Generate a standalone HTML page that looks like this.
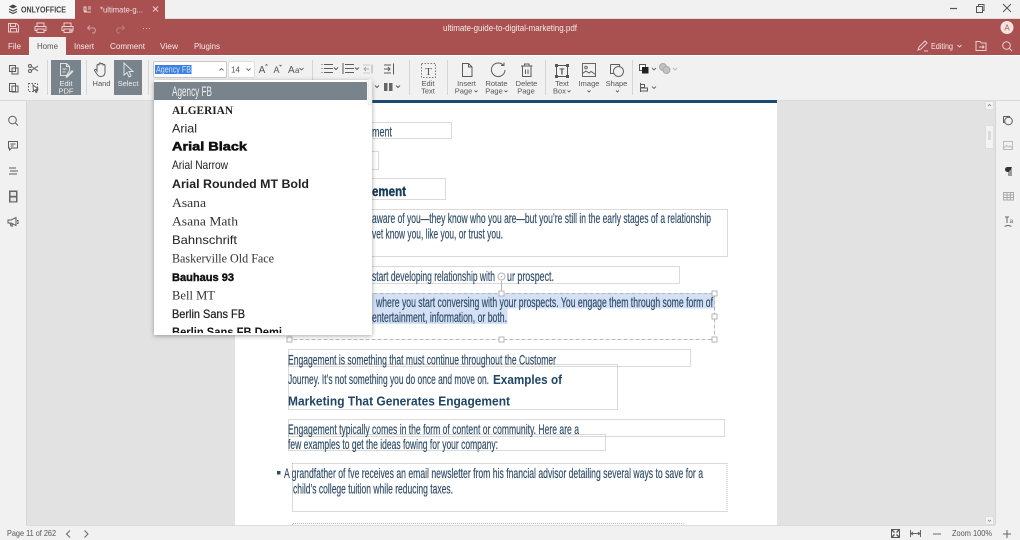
<!DOCTYPE html>
<html><head><meta charset="utf-8"><title>ONLYOFFICE</title>
<style>
html,body{margin:0;padding:0;width:1020px;height:540px;overflow:hidden;background:#f1f1f1}
svg{display:block;font-family:"Liberation Sans",sans-serif}
.i{fill:none;stroke:#5c5c5c;stroke-width:1}
.r{fill:none;stroke:#e9cfcf;stroke-width:1}
.t{font-size:7.5px;fill:#555;text-anchor:middle}
.tw{font-size:7.5px;fill:#eef0f1;text-anchor:middle}
.w{font-size:8.5px;fill:#f6e9e9}
.p{font-family:"Liberation Sans Narrow","Liberation Sans",sans-serif;font-size:14px;fill:#2f4c66;stroke:#2f4c66;stroke-width:.18}
.b{fill:none;stroke:#b5b5b5;stroke-width:1;stroke-dasharray:1 1}
.h{fill:#fff;stroke:#b5b5b5;stroke-width:1}
.d{font-size:12px;fill:#222}
.s{font-family:"Liberation Serif",serif;font-size:13px;fill:#333}
.n{font-family:"Liberation Sans Narrow","Liberation Sans",sans-serif}
.c{fill:none;stroke:#666;stroke-width:.9}
</style></head><body>
<svg width="1020" height="540" viewBox="0 0 1020 540" xmlns="http://www.w3.org/2000/svg">
<defs>
<filter id="sh" x="-10%" y="-10%" width="120%" height="120%"><feDropShadow dx="0" dy="1" stdDeviation="2.5" flood-color="#000" flood-opacity=".35"/></filter>
<clipPath id="dd"><rect x="154" y="80" width="218" height="253"/></clipPath>
</defs>

<!-- base -->
<rect width="1020" height="540" fill="#f1f1f1"/>
<!-- title bar -->
<rect x="0" y="0" width="75" height="18" fill="#f7f7f7"/>
<rect x="75" y="0" width="90" height="19" fill="#a95151"/>
<rect x="0" y="18" width="1020" height="1" fill="#dcdcdc"/>
<rect x="0" y="19" width="1020" height="36" fill="#a95151"/>
<rect x="75" y="17" width="90" height="3" fill="#a95151"/>
<rect x="0" y="55" width="1020" height="1" fill="#fff"/>
<rect x="29" y="37" width="37" height="19" fill="#f1f1f1"/>

<!-- logo -->
<path d="M9 6.500l4-2 4 2-4 2z" fill="#444"/><path d="M9 9l4 2 4-2M9 11.500l4 2 4-2" fill="none" stroke="#444" stroke-width="1.200"/>
<text x="21" y="12.500" font-size="8.500" font-weight="bold" fill="#444" textLength="45" lengthAdjust="spacingAndGlyphs">ONLYOFFICE</text>
<!-- tab -->
<path d="M84 7h2v4h-2zM88 7h3M88 9h3M84 12h7" class="r"/>
<text x="100" y="12.500" font-size="8.500" fill="#f0dddd" textLength="43" lengthAdjust="spacingAndGlyphs">*ultimate-g...</text>
<path d="M153 6.500l5 5M158 6.500l-5 5" class="r"/>
<!-- window buttons -->
<path d="M950 8.500h7" stroke="#555" stroke-width="1.200"/>
<path d="M976.500 6.500h6v6h-6z" fill="none" stroke="#555"/><path d="M978.500 6.500v-2h5.500v6h-1.500" fill="none" stroke="#555"/>
<path d="M1003 4l8 8M1011 4l-8 8" stroke="#555" stroke-width="1"/>

<!-- quick access -->
<path d="M8.500 23.500h8l2 2v6.500h-10zM10.500 23.500v3h5v-3M10.500 32v-3.500h6v3.500" class="r"/>
<path d="M37 26v-3h7v3M35 26.500h11v4h-2M37 30.500h-2v-4M37 29h7v3.500h-7z" class="r"/>
<path d="M64 26v-3h7v3M62 26.500h11v4h-2M64 30.500h-2v-4M64 29h7v3.500h-7z" class="r"/><circle cx="71" cy="31" r="2" fill="#d6b1b1"/>
<path d="M90 25.500l-2.500 2.500 2.500 2M88 28h6a3 3 0 0 1 0 5h-2" fill="none" stroke="#cf9f9f"/>
<path d="M122 25.500l2.500 2.500-2.500 2M124 28h-6a3 3 0 0 0 0 5h2" fill="none" stroke="#bb7b7b"/>
<path d="M143 28.500h1M146 28.500h1M149 28.500h1" stroke="#d9b5b5"/>

<text x="443" y="31" font-size="9" fill="#f6e9e9" textLength="134" lengthAdjust="spacingAndGlyphs">ultimate-guide-to-digital-marketing.pdf</text>
<circle cx="1007" cy="27.500" r="6.500" fill="#f3e4e2"/>
<text x="1007" y="30.500" font-size="8" fill="#a95151" text-anchor="middle">A</text>

<!-- menu tabs -->
<text class="w" x="8" y="49" textLength="13" lengthAdjust="spacingAndGlyphs">File</text>
<text x="37" y="49" font-size="8.500" fill="#555" textLength="21" lengthAdjust="spacingAndGlyphs">Home</text>
<text class="w" x="74" y="49" textLength="20" lengthAdjust="spacingAndGlyphs">Insert</text>
<text class="w" x="110" y="49" textLength="35" lengthAdjust="spacingAndGlyphs">Comment</text>
<text class="w" x="160" y="49" textLength="18" lengthAdjust="spacingAndGlyphs">View</text>
<text class="w" x="194" y="49" textLength="26" lengthAdjust="spacingAndGlyphs">Plugins</text>
<path d="M918 50l1-3 6-6 2 2-6 6zM924 51h4" class="r"/>
<text class="w" x="931" y="49" textLength="22" lengthAdjust="spacingAndGlyphs">Editing</text>
<path d="M957.500 45l2 2 2-2" class="r"/>
<path d="M976 41.500h4l1.500 1.500h4.500v7.500h-10zM979 47h5M982.500 45.500l1.500 1.500-1.500 1.500" class="r"/>
<circle cx="1006.500" cy="45.500" r="3.800" class="r"/><path d="M1009.500 48.500l2.500 2.500" class="r"/>

<!-- toolbar -->
<g class="i">
<path d="M9.500 65.500h6v6h-6zM12 68h6v6h-6z"/>
<circle cx="30" cy="66" r="1.500"/><circle cx="30" cy="71" r="1.500"/><path d="M31.500 66.500l6.500 4.500M31.500 70.500l6.500-4.500"/>
<path d="M9.500 83.500h6v8h-6zM12 86h6v6h-6z"/>
<path d="M28.500 83.500h9v8h-9z" stroke-dasharray="1.500 1.500"/><path d="M33 85l5 4-2 .5 1 2.500-1 .5-1-2.500-1.500 1z" fill="#fff"/>
</g>
<g fill="#d5d5d5"><rect x="47" y="60" width="1" height="35"/><rect x="86" y="60" width="1" height="35"/><rect x="148" y="60" width="1" height="35"/><rect x="312" y="60" width="1" height="35"/><rect x="409" y="60" width="1" height="35"/><rect x="447" y="60" width="1" height="35"/><rect x="545" y="60" width="1" height="35"/><rect x="632" y="60" width="1" height="35"/></g>

<rect x="51" y="60" width="30" height="35" fill="#78838b"/>
<path d="M60.500 63.500h6l3 3v4l-3 5h-6zM66.500 63.500v3h3M62.500 69h4M62.500 72h3" fill="none" stroke="#dfe3e5"/>
<path d="M66 76l6-6 1.500 1.500-6 6-2 .5z" fill="#dfe3e5"/>
<text class="tw" x="66" y="86">Edit</text>
<text class="tw" x="66" y="93.500">PDF</text>

<path d="M97 71v-5.500a1 1 0 0 1 2 0v-1.500a1 1 0 0 1 2 0v.5a1 1 0 0 1 2 0v1a1 1 0 0 1 2 0v7c0 2-1.500 4-4 4s-3-1-4.500-3l-2-3a1 1 0 0 1 1.500-1z" class="i"/>
<text class="t" x="101.500" y="86">Hand</text>

<rect x="114" y="60" width="28" height="35" fill="#78838b"/>
<path d="M124 63v12l3-2.500 2 4.500 2-1-2-4.500h4z" fill="none" stroke="#dfe3e5"/>
<text class="tw" x="128" y="86">Select</text>

<rect x="153.500" y="61.500" width="73" height="16" rx="1.500" fill="#fff" stroke="#c8c8c8"/>
<rect x="155" y="65" width="36.500" height="9" fill="#3e80e0"/>
<text class="n" x="156" y="72.500" font-size="9" fill="#cfe0f7" textLength="35" lengthAdjust="spacingAndGlyphs">Agency FB</text>
<path d="M219.500 70.500l2-2 2 2" class="c"/>
<rect x="228.500" y="61.500" width="26" height="16" rx="1.500" fill="#fff" stroke="#dedede"/>
<text x="231" y="72.500" font-size="8" fill="#555">14</text>
<path d="M246.500 68.500l2 2 2-2" class="c"/>
<text x="262" y="73" font-size="10" fill="#555" text-anchor="middle">A</text><path d="M265.500 65.500l1-1 1 1" class="c"/>
<text x="276.500" y="73" font-size="9" fill="#555" text-anchor="middle">A</text><path d="M279.500 65l1 1 1-1" class="c"/>
<text x="288" y="73" font-size="10" fill="#555">A</text><text x="295" y="73" font-size="8" fill="#555">a</text>
<path d="M299.500 68l2 2 2-2" class="c"/>

<g class="i" stroke="#666">
<path d="M324 64.500h9M324 68.500h9M324 72.500h9" /><path d="M321.500 64.500h1M321.500 68.500h1M321.500 72.500h1"/>
<path d="M334 67.500l2 2 2-2" />
<path d="M345 64.500h9M345 68.500h9M345 72.500h9M343 63v11"/>
<path d="M355 67.500l2 2 2-2"/>
<path d="M372 64.500v9" stroke="#aaa"/><path d="M363 65h7M363 73h7" stroke="#ccc"/><path d="M369 69h-5M366 67l-2 2 2 2" stroke="#aaa"/>
<path d="M393.500 63.500v11"/><path d="M384 69h6M388 67l2 2-2 2M384 65h7M384 73h7"/>
<path d="M375 85.500l2 2 2-2M396 85.500l2 2 2-2"/>
</g>
<rect x="384" y="83" width="3.500" height="8" fill="#666"/><rect x="389" y="83" width="3.500" height="8" fill="#666"/>

<rect x="421.500" y="63.500" width="14" height="14" fill="none" stroke="#777" stroke-dasharray="1.500 1.500"/>
<text x="428.500" y="75" font-size="11" font-family="Liberation Serif,serif" fill="#555" text-anchor="middle">T</text>
<text class="t" x="428" y="86">Edit</text><text class="t" x="428" y="93.500">Text</text>

<path d="M462.500 63.500h6l3.500 3.500v9.500h-9.500zM468.500 63.500v3.500h3.500" class="i" stroke="#666"/>
<text class="t" x="466.500" y="86">Insert</text><text class="t" x="463.500" y="93.500">Page</text><path d="M474.500 90.500l1.500 1.500 1.500-1.500" class="c"/>
<path d="M503.500 65.500a6.800 6.800 0 1 0 1.500 4.500" class="i" stroke="#666"/><path d="M501 65.500h3v-3" class="i" stroke="#666"/>
<text class="t" x="496.500" y="86">Rotate</text><text class="t" x="494" y="93.500">Page</text><path d="M504.500 90.500l1.500 1.500 1.500-1.500" class="c"/>
<path d="M522.500 66.500v10h8.500v-10M521 66h11.500M524.500 66v-2h4.500v2M525.500 69.500v4.500M528 69.500v4.500" class="i" stroke="#666"/>
<text class="t" x="526.500" y="86">Delete</text><text class="t" x="526" y="93.500">Page</text>

<rect x="556.500" y="65.500" width="11" height="11" fill="none" stroke="#555"/>
<path d="M555 64h3v3h-3zM566 64h3v3h-3zM555 75h3v3h-3zM566 75h3v3h-3z" fill="#555"/>
<text x="562" y="74.500" font-size="8" font-weight="bold" fill="#444" text-anchor="middle">T</text>
<text class="t" x="562" y="86">Text</text><text class="t" x="559.500" y="93.500">Box</text><path d="M567.500 90.500l1.500 1.500 1.500-1.500" class="c"/>
<rect x="582.500" y="63.500" width="13" height="13" fill="none" stroke="#666"/><circle cx="586" cy="67.500" r="1.300" fill="none" stroke="#666"/><path d="M582.500 73.500l3.500-2.500 3 2 2-1.500 4.500 3" class="i"/>
<text class="t" x="589" y="86">Image</text><path d="M587.500 90.500l1.500 1.500 1.500-1.500" class="c"/>
<path d="M610.500 64.500h9v3M610.500 64.500v9h3" class="i" stroke="#666"/><circle cx="618.500" cy="71.500" r="5" fill="#f1f1f1" stroke="#666"/>
<text class="t" x="616.500" y="86">Shape</text><path d="M616 90.500l1.500 1.500 1.500-1.500" class="c"/>

<rect x="639.500" y="64.500" width="6" height="6" fill="#fff" stroke="#555"/><rect x="642" y="67" width="6.500" height="6.500" fill="#222"/>
<path d="M652 68l2 2 2-2" class="c"/>
<circle cx="663" cy="67" r="3.500" fill="#c2c2c2" stroke="#aaa"/><circle cx="666.500" cy="70" r="3.500" fill="#c2c2c2" stroke="#aaa"/>
<path d="M673 68l2 2 2-2" stroke="#bbb" fill="none"/>
<path d="M640.500 83v9M641 84.500h3.500v3h-3.500M641 88h6.500v3h-6.500" class="i" stroke="#666"/>
<path d="M652 86.500l2 2 2-2" class="c"/>

<!-- top separator below toolbar -->
<rect x="0" y="100" width="1020" height="1" fill="#dadada"/>

<!-- canvas -->
<rect x="27" y="101" width="968" height="424" fill="#e2e2e2"/>
<rect x="26" y="101" width="1" height="424" fill="#d6d6d6"/>
<rect x="995" y="101" width="1" height="424" fill="#d6d6d6"/>
<rect x="235" y="101" width="542" height="424" fill="#fff"/>
<rect x="235" y="100" width="542" height="3" fill="#1c4a6e"/>

<!-- scrollbar -->
<rect x="985.500" y="101.500" width="8" height="8" fill="#f3f3f3" stroke="#ddd"/><path d="M988 106l1.500-1.500 1.500 1.500" stroke="#999" fill="none"/>
<rect x="985.500" y="125.500" width="8" height="23" rx="1" fill="#f3f3f3" stroke="#ddd"/><rect x="988" y="131" width="3" height="9" fill="#dadada"/>
<rect x="985.500" y="516.500" width="8" height="8" fill="#f3f3f3" stroke="#ddd"/><path d="M988 520l1.500 1.500 1.500-1.500" stroke="#999" fill="none"/>

<!-- page boxes -->
<rect x="340.500" y="122.500" width="111" height="16" class="b"/>
<rect x="340.500" y="151.500" width="38" height="18" class="b"/>
<rect x="340.500" y="178.500" width="105" height="21" class="b"/>
<rect x="340.500" y="209.500" width="387" height="47" class="b"/>
<rect x="340.500" y="266.500" width="339" height="17" class="b"/>
<rect x="288.500" y="349.500" width="402" height="17" class="b"/>
<rect x="288.500" y="364.500" width="329" height="45" class="b"/>
<rect x="288.500" y="419.500" width="436" height="17" class="b"/>
<rect x="288.500" y="434.500" width="317" height="16" class="b"/>
<rect x="292.500" y="463.500" width="434.500" height="48" class="b"/>
<path d="M292.500 525v-1.500h390.500v1.500" class="b"/>

<!-- selection -->
<rect x="340" y="293" width="375" height="15.500" fill="#d3e0f6"/>
<rect x="340" y="308.500" width="167.500" height="15.500" fill="#d3e0f6"/>
<rect x="289.500" y="293.500" width="425" height="46" fill="none" stroke="#b8b8b8" stroke-dasharray="4 2"/>

<!-- page text -->
<text class="p" x="372" y="136.500" textLength="20" lengthAdjust="spacingAndGlyphs">ment</text>
<text x="372" y="196" font-size="14" font-weight="bold" fill="#163a58" stroke="#163a58" stroke-width=".4" textLength="34" lengthAdjust="spacingAndGlyphs">ement</text>
<text class="p" x="372" y="223" textLength="339" lengthAdjust="spacingAndGlyphs">aware of you—they know who you are—but you’re still in the early stages of a relationship</text>
<text class="p" x="372" y="238.500" textLength="131" lengthAdjust="spacingAndGlyphs">vet know you, like you, or trust you.</text>
<text class="p" x="372" y="281" textLength="123" lengthAdjust="spacingAndGlyphs">start developing relationship with</text>
<text class="p" x="507" y="281" textLength="47" lengthAdjust="spacingAndGlyphs">ur prospect.</text>
<text class="p" x="376" y="307" textLength="337" lengthAdjust="spacingAndGlyphs">where you start conversing with your prospects. You engage them through some form of</text>
<text class="p" x="372" y="322" textLength="135" lengthAdjust="spacingAndGlyphs">entertainment, information, or both.</text>

<text class="p" x="288" y="364.500" textLength="268" lengthAdjust="spacingAndGlyphs">Engagement is something that must continue throughout the Customer</text>
<text class="p" x="288" y="384" textLength="201" lengthAdjust="spacingAndGlyphs">Journey. It’s not something you do once and move on.</text>
<text x="493" y="384" font-size="13" font-weight="bold" fill="#1f4666" textLength="69" lengthAdjust="spacingAndGlyphs">Examples of</text>
<text x="288" y="405.500" font-size="13" font-weight="bold" fill="#1f4666" textLength="222" lengthAdjust="spacingAndGlyphs">Marketing That Generates Engagement</text>
<text class="p" x="288" y="434" textLength="291" lengthAdjust="spacingAndGlyphs">Engagement typically comes in the form of content or community. Here are a</text>
<text class="p" x="288" y="449" textLength="210" lengthAdjust="spacingAndGlyphs">few examples to get the ideas fowing for your company:</text>
<rect x="277" y="471" width="3.500" height="3.500" fill="#2f4c66"/>
<text class="p" x="284" y="478" textLength="419" lengthAdjust="spacingAndGlyphs">A grandfather of fve receives an email newsletter from his fnancial advisor detailing several ways to save for a</text>
<text class="p" x="293" y="493.500" textLength="160" lengthAdjust="spacingAndGlyphs">child’s college tuition while reducing taxes.</text>

<!-- handles -->
<path d="M501.500 281v12" stroke="#b5b5b5"/>
<circle cx="501.500" cy="276.500" r="3.500" fill="#fff" stroke="#b5b5b5"/><circle cx="501.500" cy="276.500" r=".8" fill="#aaa"/>
<rect x="499" y="291" width="5" height="5" class="h"/>
<rect x="712" y="291" width="5" height="5" class="h"/>
<rect x="712" y="314" width="5" height="5" class="h"/>
<rect x="712" y="337" width="5" height="5" class="h"/>
<rect x="499" y="337" width="5" height="5" class="h"/>
<rect x="287" y="337" width="5" height="5" class="h"/>

<!-- dropdown -->
<rect x="154" y="80" width="218" height="255" fill="#fff" filter="url(#sh)"/>
<rect x="154" y="82" width="213" height="18" fill="#78838b"/>
<rect x="368" y="79" width="4" height="26" rx="1" fill="#f4f4f4" stroke="#e2e2e2" stroke-width=".6"/>
<g clip-path="url(#dd)">
<text class="n" x="172" y="96" font-size="14" fill="#eef0f1" textLength="40" lengthAdjust="spacingAndGlyphs">Agency FB</text>
<text x="172" y="114" font-family="Liberation Serif,serif" font-size="12" font-weight="bold" fill="#222" textLength="61" lengthAdjust="spacingAndGlyphs">ALGERIAN</text>
<text class="d" x="172" y="132.500" font-size="13" textLength="25" lengthAdjust="spacingAndGlyphs">Arial</text>
<text x="172" y="150.500" font-size="12" font-weight="bold" fill="#111" stroke="#111" stroke-width=".5" textLength="75" lengthAdjust="spacingAndGlyphs">Arial Black</text>
<text class="d n" x="172" y="169" textLength="56" lengthAdjust="spacingAndGlyphs">Arial Narrow</text>
<text x="172" y="188" font-size="12" font-weight="bold" fill="#222" textLength="137" lengthAdjust="spacingAndGlyphs">Arial Rounded MT Bold</text>
<text class="s" x="172" y="207" textLength="34" lengthAdjust="spacingAndGlyphs">Asana</text>
<text class="s" x="172" y="225.500" textLength="66" lengthAdjust="spacingAndGlyphs">Asana Math</text>
<text class="d" x="172" y="244" textLength="65" lengthAdjust="spacingAndGlyphs">Bahnschrift</text>
<text class="s" x="172" y="262.500" textLength="102" lengthAdjust="spacingAndGlyphs">Baskerville Old Face</text>
<text x="172" y="281" font-size="11" font-weight="bold" fill="#111" stroke="#111" stroke-width=".4" textLength="62" lengthAdjust="spacingAndGlyphs">Bauhaus 93</text>
<text class="s" x="172" y="299.500" textLength="43" lengthAdjust="spacingAndGlyphs">Bell MT</text>
<text class="d" x="172" y="318" stroke="#222" stroke-width=".25" textLength="73" lengthAdjust="spacingAndGlyphs">Berlin Sans FB</text>
<text x="172" y="336" font-size="12" font-weight="bold" fill="#111" textLength="110" lengthAdjust="spacingAndGlyphs">Berlin Sans FB Demi</text>
</g>

<!-- left sidebar -->
<g class="i" stroke="#666">
<circle cx="12.500" cy="120" r="3.800"/><path d="M15.500 123l2.500 2.500"/>
<path d="M8.500 141.500h9v6.500h-6l-2 2v-2h-1zM10.500 144h5M10.500 146h3"/>
<path d="M9 168h7M10 171h8M9 174h8"/>
</g>
<rect x="9" y="190.500" width="8.500" height="12" fill="#666"/><rect x="10.500" y="192" width="5.500" height="3.800" fill="#e8e8e8"/><rect x="10.500" y="197.500" width="5.500" height="3.800" fill="#e8e8e8"/>
<path d="M8 220h3l5-2.500v8l-5-2.500h-3zM10 223.500l1 2.500h1.500l-.8-2.300M17 220.500h1v3h-1" class="i"/>

<!-- right sidebar -->
<g class="i" stroke="#666">
<path d="M1003.500 116.500h6v2.500M1003.500 116.500v6h2"/><circle cx="1008.500" cy="121" r="3.800" fill="#f1f1f1"/>
</g>
<rect x="1003.500" y="141.500" width="9" height="8" fill="none" stroke="#bbb"/><path d="M1003.500 148l3-2.500 2 1.500 1.500-1 2.500 2" fill="none" stroke="#bbb"/>
<path d="M1011 167v9M1009 167v9" stroke="#444"/><path d="M1012 167h-4.500a2.500 2.500 0 0 0 0 5h1.500z" fill="#333"/>
<rect x="1003.500" y="192.500" width="10" height="7.500" fill="none" stroke="#aaa"/><path d="M1003.500 195h10M1003.500 197.500h10M1007 192.500v7.500M1010.300 192.500v7.500" stroke="#aaa"/>
<path d="M1005 217h4M1007 217v6" stroke="#666"/><text x="1009.500" y="223" font-size="6.500" fill="#666">a</text><path d="M1004.500 226.500q3.500-2 7 0" fill="none" stroke="#666"/>

<!-- status bar -->
<rect x="0" y="525" width="1020" height="15" fill="#f1f1f1"/>
<rect x="27" y="525" width="968" height="1" fill="#dcdcdc"/>
<text x="7" y="536" font-size="8.500" fill="#555" textLength="49" lengthAdjust="spacingAndGlyphs">Page 11 of 262</text>
<path d="M70 530.500l-3.500 3.500 3.500 3.500M84.500 530.500l3.500 3.500-3.500 3.500" fill="none" stroke="#666"/>
<rect x="891.500" y="529.500" width="8" height="8" fill="none" stroke="#555"/><path d="M892 530l2.500 2.500M899 530l-2.500 2.500M892 537l2.500-2.500M899 537l-2.500-2.500" stroke="#555" stroke-width="1.300"/>
<path d="M910.500 530v7M920.500 530v7M911 533.500h9M913 532l-2 1.500 2 1.500M918 532l2 1.500-2 1.500" fill="none" stroke="#666"/>
<path d="M933 534h8" stroke="#666"/>
<text x="952" y="536" font-size="8.500" fill="#555" textLength="40" lengthAdjust="spacingAndGlyphs">Zoom 100%</text>
<path d="M1003 534h8M1007 530v8" stroke="#666"/>
</svg>
</body></html>
